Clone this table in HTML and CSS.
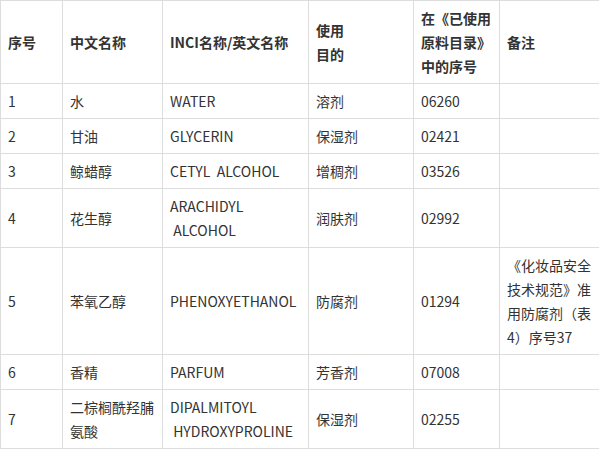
FILE: index.html
```html
<!DOCTYPE html>
<html lang="zh-CN">
<head>
<meta charset="utf-8">
<title>配方表</title>
<link rel="stylesheet" href="styles.css">
</head>
<body>
<table class="formula">
  <colgroup>
    <col class="c-no">
    <col class="c-cn">
    <col class="c-inci">
    <col class="c-use">
    <col class="c-idx">
    <col class="c-note">
  </colgroup>
  <thead>
    <tr>
      <th>序号</th>
      <th>中文名称</th>
      <th>INCI名称/英文名称</th>
      <th>使用<br>目的</th>
      <th>在《已使用<br>原料目录》<br>中的序号</th>
      <th>备注</th>
    </tr>
  </thead>
  <tbody>
    <tr><td>1</td><td>水</td><td>WATER</td><td>溶剂</td><td>06260</td><td></td></tr>
    <tr><td>2</td><td>甘油</td><td>GLYCERIN</td><td>保湿剂</td><td>02421</td><td></td></tr>
    <tr><td>3</td><td>鲸蜡醇</td><td>CETYL&nbsp; ALCOHOL</td><td>增稠剂</td><td>03526</td><td></td></tr>
    <tr><td>4</td><td>花生醇</td><td>ARACHIDYL<br>&nbsp;ALCOHOL</td><td>润肤剂</td><td>02992</td><td></td></tr>
    <tr><td>5</td><td>苯氧乙醇</td><td>PHENOXYETHANOL</td><td>防腐剂</td><td>01294</td><td>《化妆品安全技术规范》准用防腐剂（表4）序号37</td></tr>
    <tr><td>6</td><td>香精</td><td>PARFUM</td><td>芳香剂</td><td>07008</td><td></td></tr>
    <tr><td>7</td><td>二棕榈酰羟脯氨酸</td><td>DIPALMITOYL<br>&nbsp;HYDROXYPROLINE</td><td>保湿剂</td><td>02255</td><td></td></tr>
  </tbody>
</table>
</body>
</html>
```
FILE: styles.css
```css
html, body {
  margin: 0;
  padding: 0;
  background: #fff;
  overflow: hidden;
}
body {
  font-family: "Noto Sans CJK SC", "Noto Sans", sans-serif;
  font-size: 14px;
  line-height: 24px;
  color: #333;
}
.formula {
  border-collapse: collapse;
  table-layout: fixed;
  width: 604px;
}
.c-no { width: 62px; }
.c-cn { width: 100px; }
.c-inci { width: 146px; }
.c-use { width: 105px; }
.c-idx { width: 86px; }
.c-note { width: 105px; }
.formula th,
.formula td {
  border: 1px solid #ddd;
  padding: 5px 7px;
  text-align: left;
  vertical-align: middle;
  word-break: break-all;
}
.formula th {
  font-weight: bold;
}
```
